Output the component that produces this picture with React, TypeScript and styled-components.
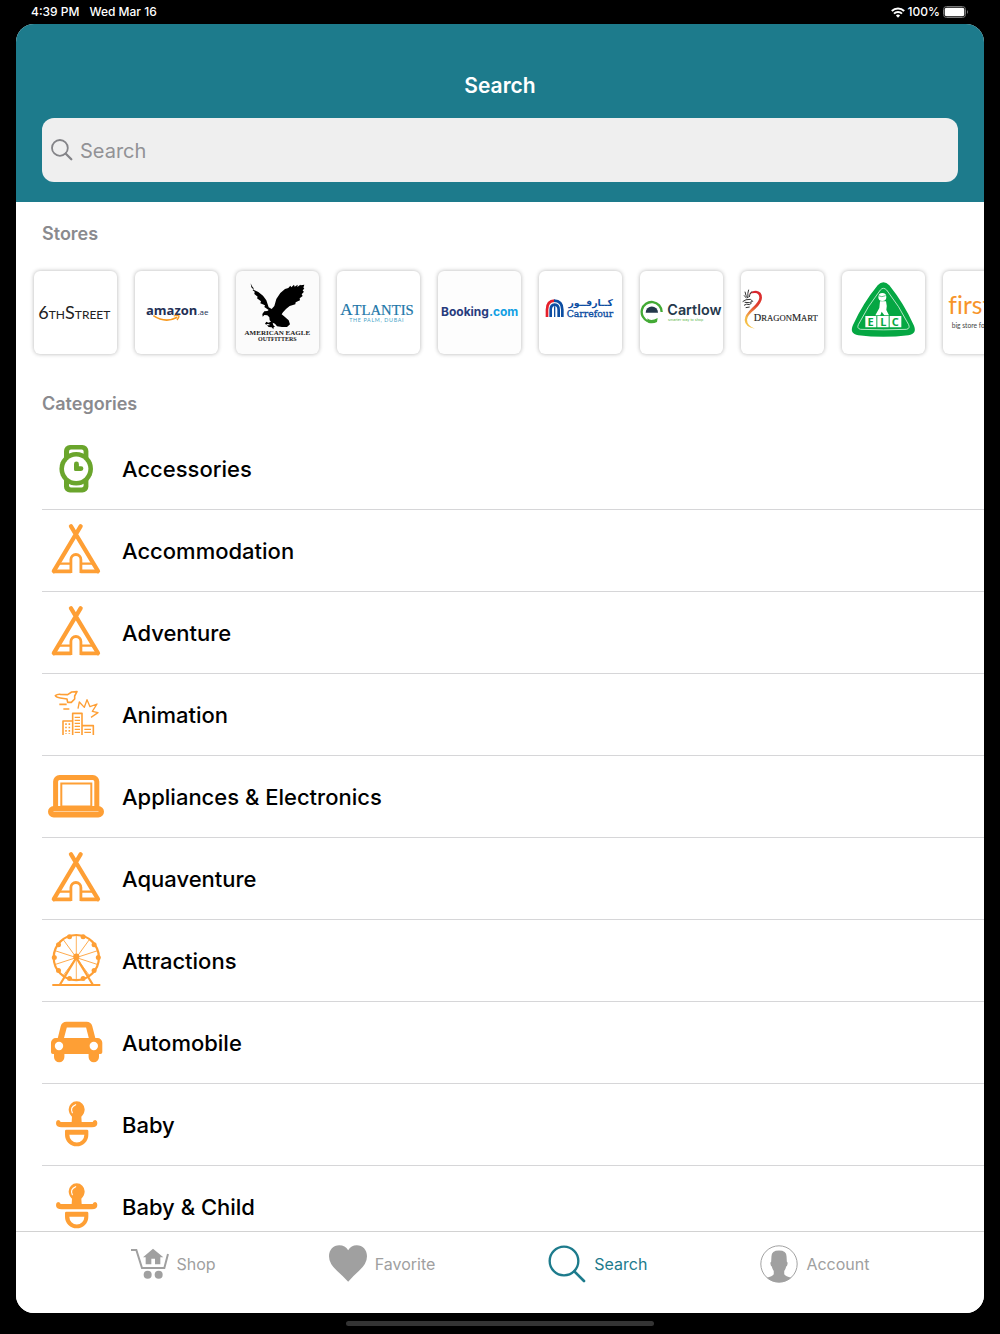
import React from "react";
import styled, { createGlobalStyle } from "styled-components";

const ORANGE = "#fe9f35";
const TEAL = "#1d7b8c";
const GREY = "#a0a0a0";
const SANS = '"Inter", "Noto Sans", sans-serif';

const GlobalStyle = createGlobalStyle`
  * { box-sizing: border-box; }
  html, body { margin: 0; background: #000; }
  body { font-family: ${SANS}; color: #000; }
`;

const Device = styled.div`
  display: flex;
  flex-direction: column;
  height: 100vh;
  min-height: 480px;
  padding: 0 16px;
  background: #000;
`;

const StatusBar = styled.div`
  display: flex;
  flex: none;
  align-items: center;
  justify-content: space-between;
  height: 24px;
  padding: 0 15px;
  color: #fff;
  font-size: 12px;
  font-weight: 500;
  line-height: 16px;
`;

const StatusGroup = styled.div<{ $gap: number }>`
  display: flex;
  align-items: center;
  gap: ${(p) => p.$gap}px;
`;

const Screen = styled.div`
  display: flex;
  flex: 1;
  flex-direction: column;
  min-height: 0;
  overflow: hidden;
  border-radius: 18px;
  background: #fff;
`;

const Header = styled.header`
  flex: none;
  padding: 49px 26px 20px;
  background: ${TEAL};
`;

const Title = styled.h1`
  margin: 0 0 19px;
  color: #fff;
  font-size: 21px;
  font-weight: 600;
  line-height: 26px;
  text-align: center;
`;

const SearchBox = styled.label`
  display: flex;
  align-items: center;
  gap: 7px;
  height: 64px;
  padding: 0 9px;
  border-radius: 12px;
  background: #efefef;
`;

const SearchInput = styled.input`
  flex: 1;
  min-width: 0;
  padding: 1px 0 0;
  border: 0;
  outline: 0;
  background: transparent;
  color: #000;
  font-family: ${SANS};
  font-size: 20px;
  line-height: 28px;
  &::placeholder { color: #929296; opacity: 1; }
`;

const Content = styled.main`
  flex: 1;
  min-height: 0;
  overflow: hidden;
`;

const SectionTitle = styled.h2`
  margin: 0;
  padding: 20px 26px 0;
  color: #8a8a8e;
  font-size: 18px;
  font-weight: 600;
  line-height: 24px;
`;

const StoreList = styled.div`
  display: flex;
  gap: 18px;
  padding: 25px 18px 18px;
  overflow: hidden;
`;

const StoreCard = styled.button<{ $tint: string }>`
  flex: none;
  width: 83px;
  height: 83px;
  padding: 0;
  border: 0;
  border-radius: 6px;
  background: ${(p) => p.$tint};
  box-shadow: 0 0 4px rgba(0, 0, 0, 0.3);
  overflow: hidden;
  svg { display: block; width: 83px; height: 83px; }
`;

const CategoryList = styled.ul`
  margin: 12px 0 0;
  padding: 0 0 0 26px;
  list-style: none;
`;

const CategoryRow = styled.li`
  height: 82px;
  border-bottom: 1px solid #d6d6d8;
`;

const CategoryLink = styled.a`
  display: flex;
  align-items: center;
  gap: 18px;
  height: 100%;
  padding-left: 6px;
  color: #000;
  font-size: 22px;
  font-weight: 500;
  line-height: 28px;
  text-decoration: none;
  svg { flex: none; width: 56px; height: 56px; }
`;

const TabBar = styled.nav`
  display: flex;
  flex: none;
  justify-content: center;
  gap: 113px;
  padding: 13px 16px 30px;
  border-top: 1px solid #d2d2d2;
  background: #fff;
`;

const Tab = styled.button<{ $active?: boolean }>`
  display: flex;
  align-items: center;
  gap: 8px;
  padding: 0;
  border: 0;
  background: transparent;
  color: ${(p) => (p.$active ? TEAL : GREY)};
  font-family: ${SANS};
  font-size: 16px;
  line-height: 20px;
  svg { width: 38px; height: 38px; }
`;

const HomeArea = styled.div`
  display: flex;
  flex: none;
  justify-content: center;
  height: 21px;
  padding-top: 8px;
`;

const HomeIndicator = styled.div`
  width: 308px;
  height: 5px;
  border-radius: 3px;
  background: #343434;
`;

/* ---------- category icons ---------- */

const WatchIcon = () => (
  <svg viewBox="0 0 56 56" aria-hidden="true">
    <rect x="16" y="4" width="24.4" height="47.6" rx="6" fill="#6aa52c" />
    <rect x="21" y="8.6" width="14.6" height="38" rx="2" fill="#fff" />
    <circle cx="28.2" cy="27.8" r="16.8" fill="#6aa52c" />
    <circle cx="28.2" cy="27.8" r="12.2" fill="#fff" />
    <path d="M26 23a2.4 2.4 0 0 1 4.9 0v2.3h2.2a2.3 2.3 0 0 1 0 4.6H27.500a1.500 1.500 0 0 1-1.500-1.500z" fill="#6aa52c" />
  </svg>
);

const TentIcon = () => (
  <svg viewBox="0 0 56 56" fill="none" stroke={ORANGE} aria-hidden="true">
    <path d="M22.900 3.200 50 48.200M32.700 3.200 5.800 48.200" strokeWidth="4.200" strokeLinecap="round" />
    <path d="M9 40.700h14M33 40.700h14" strokeWidth="2.200" />
    <path d="M5 48.400h18M32.500 48.400H51" strokeWidth="3.800" />
    <path d="M22.900 50V36.500a5 5 0 0 1 10 0V50" strokeWidth="2.800" />
  </svg>
);

const AnimationIcon = () => (
  <svg viewBox="24 21 168 168" fill="none" stroke={ORANGE} strokeWidth="4.800" strokeLinejoin="round" aria-hidden="true">
    <path d="M46 47q6-5 15-4l22 1 12-8 16-1-7 13v9l-10 10H83l-2-10-20-3q-12-2-15-7z" />
    <path d="M58 73h22M70 87h18" />
    <path d="M114 86l4-20 15 16 8-23 9 21 21-8-14 22 17 4-21 14" strokeWidth="4" />
    <path d="M98 165v-65h28v65M69 165v-42h29M127 137h33v28" />
    <path d="M104 112h16M104 121h16M104 130h16M104 139h16M104 148h16M104 157h16M133 148h20M133 157h20" strokeWidth="4" />
    <path d="M78 130v32M88 130v32" strokeDasharray="5 5" />
  </svg>
);

const LaptopIcon = () => (
  <svg viewBox="0 0 56 56" fill="none" stroke={ORANGE} aria-hidden="true">
    <path d="M7.600 39V12.500a4 4 0 0 1 4-4h33.200a4 4 0 0 1 4 4V39" strokeWidth="5" />
    <rect x="13.300" y="14.500" width="30" height="23" strokeWidth="2" />
    <rect x="2.700" y="39.700" width="50.600" height="6" rx="3" strokeWidth="5.400" />
  </svg>
);

const rim = Array.from({ length: 10 }, (_, i) => {
  const a = ((i * 36 + 18) * Math.PI) / 180;
  return { x: 28.3 + 22 * Math.sin(a), y: 24.6 - 22 * Math.cos(a) };
});

const FerrisIcon = () => (
  <svg viewBox="0 0 56 56" fill="none" stroke={ORANGE} aria-hidden="true">
    <circle cx="28.3" cy="24.600" r="22.600" strokeWidth="2.200" />
    {Array.from({ length: 10 }, (_, i) => (
      <path key={i} d="M28.300 24.600v-22" strokeWidth=".8" transform={`rotate(${i * 36} 28.300 24.600)`} />
    ))}
    {rim.map((p, i) => (
      <circle key={i} cx={p.x} cy={p.y} r="2.500" fill={ORANGE} stroke="none" />
    ))}
    <circle cx="28.300" cy="23.600" r="3.100" fill={ORANGE} stroke="none" />
    <path d="M28.300 24.600 12 51.500M28.300 24.600l16.400 26.900" strokeWidth="2.200" />
    <path d="M4.300 52h48" strokeWidth="2.200" />
  </svg>
);

const CarIcon = () => (
  <svg viewBox="0 0 56 56" aria-hidden="true">
    <path
      fill={ORANGE}
      fillRule="evenodd"
      d="M18.500 6.700h20a6 6 0 0 1 5.800 4.500l3 11.800h2.200a4.800 4.800 0 0 1 4.800 4.800v9.400a1.800 1.800 0 0 1-1.800 1.800H51v3a5.200 5.200 0 0 1-10.400 0v-3H16.400v3a5.200 5.200 0 0 1-10.400 0v-3H4.800A1.800 1.800 0 0 1 3 37.200v-9.400A4.800 4.800 0 0 1 7.800 23h2l2.900-11.800a6 6 0 0 1 5.800-4.500zM18.800 12.500 16 23h24.800l-2.700-10.500z"
    />
    <circle cx="11" cy="31" r="4.200" fill="#fff" />
    <circle cx="45.800" cy="31" r="4.200" fill="#fff" />
  </svg>
);

const PacifierIcon = () => (
  <svg viewBox="24 21 168 168" aria-hidden="true">
    <path fill={ORANGE} d="M95 96l1-16q-10-9-10-22a24 24 0 0 1 48 0q0 13-10 22l1 16z" />
    <path fill="none" stroke="#fff" strokeWidth="3.500" strokeLinecap="round" d="M97 68q-8-16 10-24" />
    <path fill={ORANGE} d="M54 90q6 0 8 6h96q2-6 8-6 6 2 6 9 0 13-16 13H65q-17 0-17-13 0-7 6-9z" />
    <path fill={ORANGE} fillRule="evenodd" d="M79 119h62q4 0 4 4v11a35 35 0 0 1-70 0v-11q0-4 4-4zM88 134h45a22 23 0 0 1-45 0z" />
  </svg>
);

/* ---------- store logos ---------- */

const SixthStreetLogo = () => (
  <svg viewBox="44 34 249 249" role="img" aria-label="6thStreet">
    <text x="57" y="177" fontFamily="Lato, sans-serif" fontSize="36" fill="#222">
      <tspan fontSize="54">6</tspan>TH<tspan fontSize="54">S</tspan>TREET
    </text>
  </svg>
);

const AmazonLogo = () => (
  <svg viewBox="347 34 249 249" role="img" aria-label="amazon.ae">
    <text x="380" y="165" fontFamily="Open Sans, sans-serif" fontSize="39" fontWeight="700" fill="#232f55">
      amazon<tspan fontSize="24" fontWeight="400">.ae</tspan>
    </text>
    <path d="M402 168q36 24 72 5" fill="none" stroke="#f7981d" strokeWidth="5" />
    <path d="M463 169q10-4 16 0 1 4-6 12" fill="none" stroke="#f7981d" strokeWidth="4" />
  </svg>
);

const EagleLogo = () => (
  <svg viewBox="649 34 249 249" role="img" aria-label="American Eagle Outfitters">
    <path
      d="M693 71l2 12 8 8 13 6 14 11 10 14 7 21 9 5 8-9 6-21 12-18 14-12 10-3 6-7 3 5 8-8 2 6 9-6-1 7 9-7 1 2 11-2-3 9 3 1-5 8 4 3-7 8 3 5-9 7 1 6-13 6-1 6-17 5-11 9-9 10-4 6 9 7 12 11 4 12-9 8-15 0-15-2-6-8-7-3 2 8 5 4-4 2-1 6-5-6-9-1-5-5 8 0-1-3-7-1-2 2-4-3 4-6 6 3 8-3-4-4-1-9-6-6-9-1-5 5-1-8 6-8 9-1 4-3-13-9 2-5-14-6 2-6-12-9 2-5-10-8 1-7-6-4 3-6-5-6z"
      fill="#000"
      strokeLinejoin="round"
    />
    <g fontFamily="Liberation Serif, serif" fontWeight="700" fill="#222" textAnchor="middle">
      <text x="773" y="227" fontSize="21">AMERICAN EAGLE</text>
      <text x="773" y="245" fontSize="18">OUTFITTERS</text>
    </g>
  </svg>
);

const AtlantisLogo = () => (
  <svg viewBox="36 34 249 249" role="img" aria-label="Atlantis The Palm, Dubai">
    <g fill="#1d76a8" textAnchor="middle">
      <text x="156" y="165" fontFamily="Liberation Serif, serif" fontSize="44" stroke="#1d76a8" strokeWidth=".6">
        <tspan fontSize="51">A</tspan>TLANTIS
      </text>
      <text x="155" y="188" fontFamily="Lato, sans-serif" fontSize="16" letterSpacing="2" fill="#46a5c8">THE PALM, DUBAI</text>
    </g>
  </svg>
);

const BookingLogo = () => (
  <svg viewBox="338 34 249 249" role="img" aria-label="Booking.com">
    <text x="347" y="170" fontFamily={SANS} fontSize="36" fontWeight="700" fill="#273b7d">
      Booking<tspan fill="#129fe3">.com</tspan>
    </text>
  </svg>
);

const CarrefourLogo = () => (
  <svg viewBox="641 34 249 249" role="img" aria-label="Carrefour">
    <g fill="none" strokeWidth="8">
      <path d="M665 172v-22q0-26 23-27" stroke="#e5202b" />
      <path d="M686 123q25 1 25 27v22" stroke="#0d4ea2" />
      <path d="M676 172v-22q0-14 12-15 12 1 12 15v22" stroke="#0d4ea2" />
      <path d="M688 140v32" stroke="#0d4ea2" strokeWidth="4" />
    </g>
    <g fill="#0d4ea2">
      <text x="796" y="138" fontFamily="DejaVu Sans, sans-serif" fontSize="28" fontWeight="700" textAnchor="middle">كــارفــور</text>
      <text x="724" y="171" fontFamily="DejaVu Serif, Liberation Serif, serif" fontSize="28" fontWeight="400" stroke="#0d4ea2" strokeWidth="1">Carrefour</text>
    </g>
  </svg>
);

const CartlowLogo = () => (
  <svg viewBox="28 34 249 249" role="img" aria-label="Cartlow">
    <path d="M93 157A30 30 0 1 0 52 185" fill="none" stroke="#43aa35" strokeWidth="7" />
    <path d="M50 176q10 10 31-1l-2 12q-12 6-27 2z" fill="#43aa35" />
    <path d="M45 159a18 18 0 0 1 37 0z" fill="#24384b" />
    <text x="110" y="165" fontFamily={SANS} fontSize="43" fontWeight="600" fill="#24384b">Cartlow</text>
    <text x="112" y="183" fontFamily={SANS} fontSize="11" fill="#58b548">smarter way to shop</text>
  </svg>
);

const DragonMartLogo = () => (
  <svg viewBox="331 34 249 249" role="img" aria-label="Dragon Mart">
    <defs>
      <linearGradient id="dragonTail" gradientUnits="userSpaceOnUse" x1="0" y1="92" x2="0" y2="207">
        <stop offset="0" stopColor="#d9232e" />
        <stop offset=".4" stopColor="#e0402f" />
        <stop offset=".7" stopColor="#f4b94a" />
        <stop offset="1" stopColor="#f6c544" />
      </linearGradient>
    </defs>
    <path d="M355 104q7-11 21-11 18 2 18 21 0 14-21 35-23 18-24 31 0 18 24 27-30-5-31-26 0-15 22-36 21-19 22-31-1-14-13-14-10 0-18 4z" fill="url(#dragonTail)" />
    <path d="M343 96q1 12 9 19M354 90q-4 10-2 24M364 95q-8 8-8 17M340 107l8 9M336 126q8-8 24-7l6 6-10 4-14-1M340 137q8-6 16-2l7-5M345 144l12-2" fill="none" stroke="#333" strokeWidth="3" />
    <text x="369" y="183" fontFamily="Liberation Serif, serif" fontSize="26" fill="#222" stroke="#222" strokeWidth=".4">
      <tspan fontSize="31">D</tspan>RAGON<tspan fontSize="31">M</tspan>ART
    </text>
  </svg>
);

const ElcLogo = () => (
  <svg viewBox="633 34 249 249" role="img" aria-label="ELC">
    <path d="M740 77q17-19 35 0 44 55 73 119 12 26-16 31-75 9-150 0-28-5-16-31 29-64 74-119z" fill="#05a743" />
    <path d="M748 91q9-10 19 0 38 48 66 104 5 12-7 14-68 3-137 0-12-2-7-14 28-56 66-104z" fill="none" stroke="#d5f3df" strokeWidth="2.500" />
    <circle cx="754" cy="112" r="12" fill="#fff" />
    <path d="M747 125l18 0q4 14 1 26l8 16h-14l-8-11-4 11h-15l12-22z" fill="#fff" />
    <path d="M742 108q10 6 22 0" fill="none" stroke="#05a743" strokeWidth="2" />
    <path d="M703 169h33v34h-33zM739 169h34v34h-34zM776 169h35v34h-35z" fill="#fff" />
    <g fontFamily="Noto Sans, sans-serif" fontSize="33" fontWeight="700" fill="#05a743" textAnchor="middle">
      <text x="719" y="198">E</text>
      <text x="757" y="198">L</text>
      <text x="793" y="198">C</text>
    </g>
  </svg>
);

const UnligatedText = styled.text`
  font-variant-ligatures: none;
`;

const FirstLogo = () => (
  <svg viewBox="936 34 249 249" role="img" aria-label="firstcry">
    <UnligatedText x="952" y="163" fontFamily="Lato, sans-serif" fontSize="74" fill="#f7942a">firstcry</UnligatedText>
    <text x="962" y="205" fontFamily="Lato, sans-serif" fontSize="20" fill="#444">big store for little ones</text>
  </svg>
);

/* ---------- interface icons ---------- */

const WifiIcon = () => (
  <svg width="14" height="11" viewBox="0 0 14 11" fill="none" stroke="#fff" strokeWidth="2" aria-hidden="true">
    <path d="M.8 4a8.800 8.800 0 0 1 12.400 0M3 6.600a5.700 5.700 0 0 1 8 0" />
    <path d="M7 10.800 4.900 8.500a3 3 0 0 1 4.200 0z" fill="#fff" stroke="none" />
  </svg>
);

const BatteryIcon = () => (
  <svg width="26" height="12" viewBox="0 0 26 12" aria-hidden="true">
    <rect x=".5" y=".5" width="22" height="11" rx="3" fill="none" stroke="#777" />
    <rect x="1.700" y="1.700" width="19.600" height="8.600" rx="1.800" fill="#fff" />
    <path d="M24 4q2 2 0 4z" fill="#777" />
  </svg>
);

const SmallSearchIcon = () => (
  <svg width="22" height="22" viewBox="0 0 22 22" fill="none" stroke="#848488" strokeLinecap="round" aria-hidden="true">
    <circle cx="8.900" cy="8.900" r="7.900" strokeWidth="1.800" />
    <path d="M14.800 14.800 20.300 20.300" strokeWidth="2.300" />
  </svg>
);

const ShopIcon = () => (
  <svg viewBox="63 60 114 114" aria-hidden="true">
    <path d="M63 75h16l17 54h67l11-42" fill="none" stroke={GREY} strokeWidth="6" />
    <path d="M129 71l31 26h-9v21h-16v-17h-11v17h-17V97h-8z" fill={GREY} />
    <circle cx="113" cy="149" r="12" fill={GREY} />
    <circle cx="146" cy="149" r="12" fill={GREY} />
  </svg>
);

const HeartIcon = () => (
  <svg viewBox="659 60 115 115" aria-hidden="true">
    <path d="M717 171q-14-15-34-33-24-22-24-44c0-19 13-33 31-33q18 0 27 15 9-15 26-15c18 0 31 14 31 33q0 22-24 44-20 18-33 33z" fill={GREY} />
  </svg>
);

const TabSearchIcon = () => (
  <svg viewBox="55 59 114 114" fill="none" stroke={TEAL} aria-hidden="true">
    <circle cx="103" cy="107" r="43" strokeWidth="7" />
    <path d="M134 138l29 29" strokeWidth="8" strokeLinecap="round" />
  </svg>
);

const AccountIcon = () => (
  <svg viewBox="691 58 116 116" aria-hidden="true">
    <clipPath id="portrait"><circle cx="749" cy="116" r="56" /></clipPath>
    <circle cx="749" cy="116" r="55.500" fill="none" stroke={GREY} strokeWidth="3" />
    <path clipPath="url(#portrait)" d="M749 75q23 0 23 17l1 17q3 1 2 7-1 7-4 8-2 9-6 13v10q4 6 22 11l4 18h-84l4-18q18-5 22-11v-10q-4-4-6-13-3-1-4-8-1-6 2-7l1-17q0-17 23-17z" fill={GREY} />
  </svg>
);

/* ---------- data ---------- */

const stores = [
  { name: "6thStreet", Logo: SixthStreetLogo, tint: "#fff" },
  { name: "Amazon", Logo: AmazonLogo, tint: "#fff" },
  { name: "American Eagle", Logo: EagleLogo, tint: "#fbfbfb" },
  { name: "Atlantis", Logo: AtlantisLogo, tint: "#fff" },
  { name: "Booking", Logo: BookingLogo, tint: "#fdfdfd" },
  { name: "Carrefour", Logo: CarrefourLogo, tint: "#fff" },
  { name: "Cartlow", Logo: CartlowLogo, tint: "#fff" },
  { name: "Dragon Mart", Logo: DragonMartLogo, tint: "#fff" },
  { name: "ELC", Logo: ElcLogo, tint: "#fff" },
  { name: "Firstcry", Logo: FirstLogo, tint: "#fff" },
];

const categories = [
  { name: "Accessories", Icon: WatchIcon },
  { name: "Accommodation", Icon: TentIcon },
  { name: "Adventure", Icon: TentIcon },
  { name: "Animation", Icon: AnimationIcon },
  { name: "Appliances & Electronics", Icon: LaptopIcon },
  { name: "Aquaventure", Icon: TentIcon },
  { name: "Attractions", Icon: FerrisIcon },
  { name: "Automobile", Icon: CarIcon },
  { name: "Baby", Icon: PacifierIcon },
  { name: "Baby & Child", Icon: PacifierIcon },
];

const tabs = [
  { name: "Shop", Icon: ShopIcon },
  { name: "Favorite", Icon: HeartIcon },
  { name: "Search", Icon: TabSearchIcon, active: true },
  { name: "Account", Icon: AccountIcon },
];

export default function App() {
  return (
    <>
      <GlobalStyle />
      <Device>
        <StatusBar>
          <StatusGroup $gap={10}>
            <span>4:39 PM</span>
            <span>Wed Mar 16</span>
          </StatusGroup>
          <StatusGroup $gap={3}>
            <WifiIcon />
            <span>100%</span>
            <BatteryIcon />
          </StatusGroup>
        </StatusBar>
        <Screen>
          <Header>
            <Title>Search</Title>
            <SearchBox>
              <SmallSearchIcon />
              <SearchInput type="search" placeholder="Search" aria-label="Search" />
            </SearchBox>
          </Header>
          <Content>
            <SectionTitle>Stores</SectionTitle>
            <StoreList>
              {stores.map(({ name, Logo, tint }) => (
                <StoreCard key={name} type="button" $tint={tint}>
                  <Logo />
                </StoreCard>
              ))}
            </StoreList>
            <SectionTitle>Categories</SectionTitle>
            <CategoryList>
              {categories.map(({ name, Icon }) => (
                <CategoryRow key={name}>
                  <CategoryLink href="#">
                    <Icon />
                    <span>{name}</span>
                  </CategoryLink>
                </CategoryRow>
              ))}
            </CategoryList>
          </Content>
          <TabBar>
            {tabs.map(({ name, Icon, active }) => (
              <Tab key={name} type="button" $active={active}>
                <Icon />
                <span>{name}</span>
              </Tab>
            ))}
          </TabBar>
        </Screen>
        <HomeArea>
          <HomeIndicator />
        </HomeArea>
      </Device>
    </>
  );
}
